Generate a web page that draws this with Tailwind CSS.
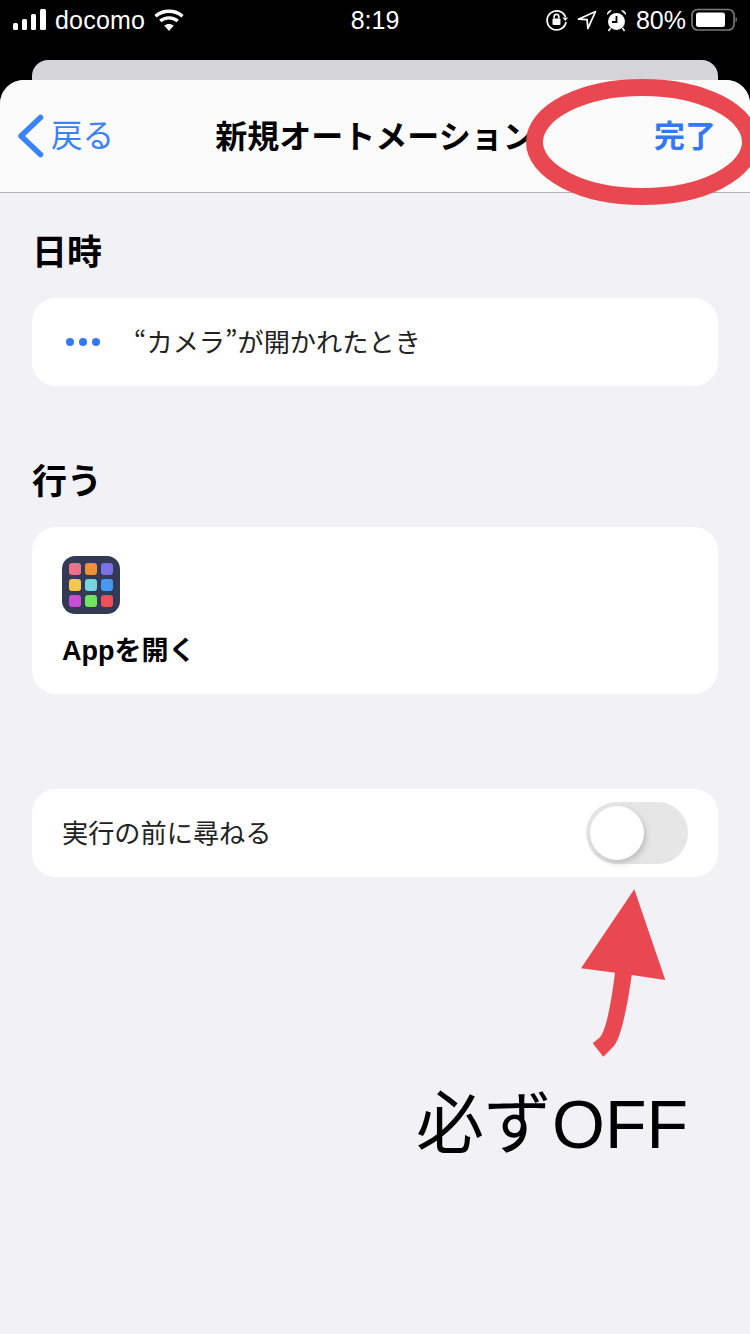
<!DOCTYPE html>
<html lang="ja">
<head>
<meta charset="utf-8">
<script src="https://cdn.jsdelivr.net/npm/@tailwindcss/browser@4"></script>
</head>
<body class="bg-black">
<div class="relative w-[750px] h-[1334px] overflow-hidden bg-black flex flex-col font-['Inter','Noto_Sans_CJK_JP',sans-serif] text-black">
  <!-- status bar -->
  <div class="h-10 grid grid-cols-[1fr_auto_1fr] items-center text-white pl-[13px] pr-[13px] shrink-0">
    <div class="flex items-center">
      <svg width="33" height="22" viewBox="0 0 33 22" fill="#fff"><rect x="0" y="14" width="5" height="7" rx="1.5"/><rect x="9" y="10" width="5" height="11" rx="1.5"/><rect x="18" y="5" width="5" height="16" rx="1.5"/><rect x="27" y="0" width="6" height="21" rx="1.5"/></svg>
      <span class="ml-[9px] text-[25px] leading-none tracking-[0.2px] font-['Liberation_Sans',sans-serif]">docomo</span>
      <svg class="ml-[9px]" width="30" height="22" viewBox="0 0 30 22" fill="none" stroke="#fff" stroke-width="3.4"><path d="M1.5 7.2C9 .6 21 .6 28.5 7.2"/><path d="M6.3 12C11.2 7.8 18.8 7.8 23.7 12"/><path d="M15 22 10.2 16.6C13 14.4 17 14.4 19.8 16.6Z" fill="#fff" stroke="none"/></svg>
    </div>
    <div class="text-[25px] leading-none font-medium font-['Liberation_Sans',sans-serif]">8:19</div>
    <div class="flex items-center justify-end">
      <svg width="22" height="22" viewBox="0 0 22 22" fill="none" stroke="#fff" stroke-width="1.7"><path d="M19.5 8A9.5 9.5 0 1 0 20 13"/><path d="M16.5 8.5h5.5L19.3 12Z" fill="#fff" stroke="none"/><rect x="6.5" y="9.5" width="8" height="6.5" rx="1" fill="#fff" stroke="none"/><path d="M8.2 9.5V7.6a2.3 2.3 0 0 1 4.6 0v1.9"/></svg>
      <svg class="ml-[9px]" width="20" height="20" viewBox="0 0 20 20" fill="none" stroke="#fff" stroke-width="1.8" stroke-linejoin="round"><path d="M18.5 1.5 1.5 9.2l8.6.5.8 8.8Z"/></svg>
      <svg class="ml-[9px]" width="21" height="23" viewBox="0 0 21 23" fill="#fff"><circle cx="10.5" cy="12.5" r="8.5"/><path d="M10.5 7v6H6" fill="none" stroke="#000" stroke-width="1.8"/><path d="M1 6a4 4 0 0 1 5-4.5ZM20 6a4 4 0 0 0-5-4.5Z"/><path d="M4.5 19 2.5 22M16.5 19l2 3" stroke="#fff" stroke-width="1.6"/></svg>
      <span class="ml-[9px] text-[25px] leading-none font-['Liberation_Sans',sans-serif]">80%</span>
      <svg class="ml-[5px]" width="46" height="24" viewBox="0 0 46 24" fill="none"><rect x="1" y="1.500" width="42" height="20.500" rx="5.500" stroke="#7b7b7b" stroke-width="1.600"/><rect x="5" y="4.500" width="29" height="14.500" rx="2.500" fill="#fff"/><path d="M44.500 8.500c1 .5 1.500 1.700 1.500 3s-.5 2.500-1.500 3Z" fill="#6b6b6b"/></svg>
    </div>
  </div>

  <!-- card behind the sheet -->
  <div class="mt-5 mx-8 h-5 rounded-t-2xl bg-[#d4d4d9] shrink-0"></div>

  <!-- sheet -->
  <div class="flex-1 bg-[#f1f1f6] rounded-t-3xl overflow-hidden flex flex-col font-['Noto_Sans_CJK_JP',sans-serif]">
    <div class="h-[113px] shrink-0 bg-[#fbfbfc] border-b border-[#b2b2b4] grid grid-cols-[1fr_auto_1fr] items-center pb-1">
      <div class="flex items-center pl-[17px] text-[#3a82f7]">
        <svg class="mt-1" width="27" height="44" viewBox="0 0 27 44" fill="none" stroke="#3a82f7" stroke-width="5.500" stroke-linecap="round" stroke-linejoin="round"><path d="M23.500 3.500 4 22l19.500 18.500"/></svg>
        <span class="ml-[7px] text-[31.500px] leading-none pb-[1px]">戻る</span>
      </div>
      <div class="text-[32px] leading-none font-bold">新規オートメーション</div>
      <div class="text-right pr-[34px] text-[31px] leading-none font-bold text-[#3478f6] pb-[1px]">完了</div>
    </div>

    <div class="px-8 pt-[35px] flex flex-col">
      <h2 class="text-[35px] leading-[44px] font-bold">日時</h2>
      <div class="mt-[26px] h-[88px] rounded-3xl bg-white flex items-center pl-[34px]">
        <div class="flex items-center gap-[5px] w-[68px]">
          <span class="size-[8px] rounded-full bg-[#3478f6]"></span>
          <span class="size-[8px] rounded-full bg-[#3478f6]"></span>
          <span class="size-[8px] rounded-full bg-[#3478f6]"></span>
        </div>
        <span class="text-[26.200px] leading-none text-[#222] pb-[2px]">“カメラ”が開かれたとき</span>
      </div>

      <h2 class="mt-[71px] text-[35px] leading-[44px] font-bold">行う</h2>
      <div class="mt-[26px] h-[167px] rounded-3xl bg-white pl-[30px] pt-[29px]">
        <div class="size-[58px] rounded-[13px] bg-[#323a55] grid grid-cols-3 gap-1 p-[7px]">
          <span class="rounded-[3px] bg-[#f0708a]"></span>
          <span class="rounded-[3px] bg-[#ef9138]"></span>
          <span class="rounded-[3px] bg-[#7a71e4]"></span>
          <span class="rounded-[3px] bg-[#f8c74a]"></span>
          <span class="rounded-[3px] bg-[#74d6df]"></span>
          <span class="rounded-[3px] bg-[#4498f7]"></span>
          <span class="rounded-[3px] bg-[#c84fd3]"></span>
          <span class="rounded-[3px] bg-[#72e55f]"></span>
          <span class="rounded-[3px] bg-[#ee5058]"></span>
        </div>
        <div class="mt-[19px] text-[27px] leading-[36px] font-bold font-['Liberation_Sans','Noto_Sans_CJK_JP',sans-serif]">Appを開く</div>
      </div>

      <div class="mt-[95px] h-[88px] rounded-3xl bg-white flex items-center justify-between pl-[30px] pr-[30px]">
        <span class="text-[26.200px] leading-none text-[#222] pb-[2px]">実行の前に尋ねる</span>
        <div class="w-[102px] h-[62px] rounded-full bg-[#e6e6e7] p-1 flex">
          <span class="size-[54px] rounded-full bg-white shadow-[2px_3px_6px_rgba(0,0,0,0.18)]"></span>
        </div>
      </div>
    </div>
  </div>

  <!-- annotations -->
  <svg class="absolute left-0 top-0 pointer-events-none" width="750" height="1334" viewBox="0 0 750 1334" fill="none">
    <ellipse cx="642.500" cy="142" rx="108" ry="54.500" stroke="#ea4850" stroke-width="17"/>
    <path d="M634.300 889.300 665.300 980 631.700 975C626 1015 620 1040 613 1047L603.300 1056.700 592.700 1043.300 600 1037.300C606 1030 611 1005 615 972.700L581 968.300Z" fill="#ea4850"/>
  </svg>
  <div class="absolute left-[416px] top-[1079px] text-[68px] leading-[90px] whitespace-nowrap font-['Liberation_Sans','Noto_Sans_CJK_JP',sans-serif]">必ずOFF</div>
</div>
</body>
</html>
